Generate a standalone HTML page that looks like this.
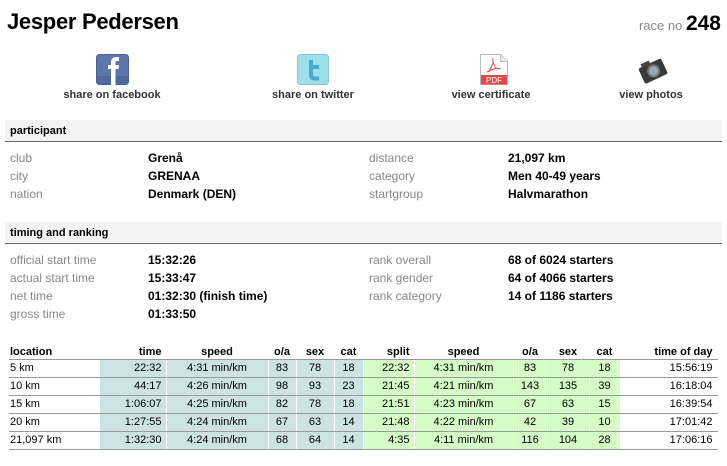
<!DOCTYPE html>
<html><head><meta charset="utf-8"><style>
*{margin:0;padding:0;box-sizing:border-box}
body{width:727px;height:466px;background:#fff;font-family:"Liberation Sans",Arial,sans-serif;color:#000;position:relative;overflow:hidden}
.a{position:absolute;white-space:nowrap}
h1{position:absolute;left:7px;top:9px;font-size:22px;font-weight:bold;letter-spacing:-0.3px}
.rn{right:6px;top:12px;font-size:13px;color:#888}
.rn b{font-size:21px;color:#000}
.lab{font-size:11px;font-weight:bold;color:#333;text-align:center;width:160px}
.band{position:absolute;left:5px;width:717px;height:22px;background:#f3f3f3;border-bottom:1px solid #666;font-size:11px;font-weight:bold;padding:5px 0 0 5px}
.g{font-size:12px;color:#888}
.v{font-size:12px;font-weight:bold}
table{position:absolute;left:9px;top:345px;border-collapse:collapse;font-size:11px}
td,th{height:18px;padding:0 4px;border-bottom:1px solid #999;border-right:1px solid #fff}
th{height:14px;text-align:right;font-weight:bold}
td{text-align:right}
.b{background:#cde3e3}.gr{background:#d5fbc6}
.c{text-align:center}.l{text-align:left}
</style></head><body>
<h1>Jesper Pedersen</h1>
<div class="a rn">race no <b>248</b></div>

<svg class="a" style="left:96px;top:54px" width="33" height="31" viewBox="0 0 33 31"><rect x="0.5" y="0.5" width="32" height="30" rx="3" fill="#5c77a9" stroke="#4a6192"/><rect x="1" y="22" width="31" height="8" fill="#4e6a9c"/><path d="M15 31V15h-3v-4h3V8c0-3 2-5 5-5h3v4h-2c-1 0-1.5.5-1.5 1.5V11h3.5l-.5 4h-3v16z" fill="#fff"/></svg>
<svg class="a" style="left:297px;top:54px" width="32" height="31" viewBox="0 0 32 31"><rect x="0.5" y="0.5" width="31" height="30" rx="3" fill="#9ee0ea" stroke="#86c9d6"/><path d="M12 6h4v5h6v4h-6v5c0 2 1 2.5 3 2.5h3v4h-4c-4 0-6-2-6-6z" fill="#4aa9d1"/></svg>
<svg class="a" style="left:480px;top:54px" width="28" height="31" viewBox="0 0 28 31"><path d="M0.5 0.5h20l7 7v23h-27z" fill="#fff" stroke="#bbb"/><path d="M20.5 .5v7h7" fill="#eee" stroke="#bbb"/><rect x="1" y="21" width="26" height="9.5" fill="#e8474a"/><text x="14" y="29" font-size="8" fill="#fff" text-anchor="middle" font-family="Liberation Sans">PDF</text><path d="M13 4c-1 4 1 7 3 10l-9 4M13 9l-4 9M16 14l5 1" fill="none" stroke="#e8474a" stroke-width="1"/></svg>
<svg class="a" style="left:637px;top:56px" width="31" height="29" viewBox="0 0 31 29"><g transform="rotate(-25 15 14)"><rect x="3" y="7" width="25" height="17" rx="2" fill="#3a3a3a"/><rect x="7" y="4" width="9" height="4" fill="#444"/><circle cx="16" cy="15.5" r="6.5" fill="#777"/><circle cx="16" cy="15.5" r="4.5" fill="#9ab"/></g></svg>

<div class="a lab" style="left:32px;top:89px">share on facebook</div>
<div class="a lab" style="left:233px;top:89px">share on twitter</div>
<div class="a lab" style="left:411px;top:89px">view certificate</div>
<div class="a lab" style="left:571px;top:89px">view photos</div>

<div class="band" style="top:120px">participant</div>
<div class="a g" style="left:10px;top:151px">club</div><div class="a v" style="left:148px;top:151px">Grenå</div>
<div class="a g" style="left:10px;top:169px">city</div><div class="a v" style="left:148px;top:169px">GRENAA</div>
<div class="a g" style="left:10px;top:187px">nation</div><div class="a v" style="left:148px;top:187px">Denmark (DEN)</div>
<div class="a g" style="left:369px;top:151px">distance</div><div class="a v" style="left:508px;top:151px">21,097 km</div>
<div class="a g" style="left:369px;top:169px">category</div><div class="a v" style="left:508px;top:169px">Men 40-49 years</div>
<div class="a g" style="left:369px;top:187px">startgroup</div><div class="a v" style="left:508px;top:187px">Halvmarathon</div>

<div class="band" style="top:222px">timing and ranking</div>
<div class="a g" style="left:10px;top:253px">official start time</div><div class="a v" style="left:148px;top:253px">15:32:26</div>
<div class="a g" style="left:10px;top:271px">actual start time</div><div class="a v" style="left:148px;top:271px">15:33:47</div>
<div class="a g" style="left:10px;top:289px">net time</div><div class="a v" style="left:148px;top:289px">01:32:30 (finish time)</div>
<div class="a g" style="left:10px;top:307px">gross time</div><div class="a v" style="left:148px;top:307px">01:33:50</div>
<div class="a g" style="left:369px;top:253px">rank overall</div><div class="a v" style="left:508px;top:253px">68 of 6024 starters</div>
<div class="a g" style="left:369px;top:271px">rank gender</div><div class="a v" style="left:508px;top:271px">64 of 4066 starters</div>
<div class="a g" style="left:369px;top:289px">rank category</div><div class="a v" style="left:508px;top:289px">14 of 1186 starters</div>

<table>
<colgroup><col style="width:90px"><col style="width:67px"><col style="width:102px"><col style="width:28px"><col style="width:38px"><col style="width:29px"><col style="width:51px"><col style="width:99px"><col style="width:34px"><col style="width:42px"><col style="width:31px"><col style="width:97px"></colgroup>
<tr><th class="l" style="padding-left:1px">location</th><th>time</th><th class="c">speed</th><th class="c">o/a</th><th class="c">sex</th><th class="c">cat</th><th>split</th><th class="c">speed</th><th class="c">o/a</th><th class="c">sex</th><th class="c">cat</th><th>time of day</th></tr>
<tr><td class="l" style="padding-left:1px">5 km</td><td class="b">22:32</td><td class="b c">4:31 min/km</td><td class="b c">83</td><td class="b c">78</td><td class="b c">18</td><td class="gr">22:32</td><td class="gr c">4:31 min/km</td><td class="gr c">83</td><td class="gr c">78</td><td class="gr c">18</td><td>15:56:19</td></tr>
<tr><td class="l" style="padding-left:1px">10 km</td><td class="b">44:17</td><td class="b c">4:26 min/km</td><td class="b c">98</td><td class="b c">93</td><td class="b c">23</td><td class="gr">21:45</td><td class="gr c">4:21 min/km</td><td class="gr c">143</td><td class="gr c">135</td><td class="gr c">39</td><td>16:18:04</td></tr>
<tr><td class="l" style="padding-left:1px">15 km</td><td class="b">1:06:07</td><td class="b c">4:25 min/km</td><td class="b c">82</td><td class="b c">78</td><td class="b c">18</td><td class="gr">21:51</td><td class="gr c">4:23 min/km</td><td class="gr c">67</td><td class="gr c">63</td><td class="gr c">15</td><td>16:39:54</td></tr>
<tr><td class="l" style="padding-left:1px">20 km</td><td class="b">1:27:55</td><td class="b c">4:24 min/km</td><td class="b c">67</td><td class="b c">63</td><td class="b c">14</td><td class="gr">21:48</td><td class="gr c">4:22 min/km</td><td class="gr c">42</td><td class="gr c">39</td><td class="gr c">10</td><td>17:01:42</td></tr>
<tr><td class="l" style="padding-left:1px">21,097 km</td><td class="b">1:32:30</td><td class="b c">4:24 min/km</td><td class="b c">68</td><td class="b c">64</td><td class="b c">14</td><td class="gr">4:35</td><td class="gr c">4:11 min/km</td><td class="gr c">116</td><td class="gr c">104</td><td class="gr c">28</td><td>17:06:16</td></tr>
</table>
</body></html>
